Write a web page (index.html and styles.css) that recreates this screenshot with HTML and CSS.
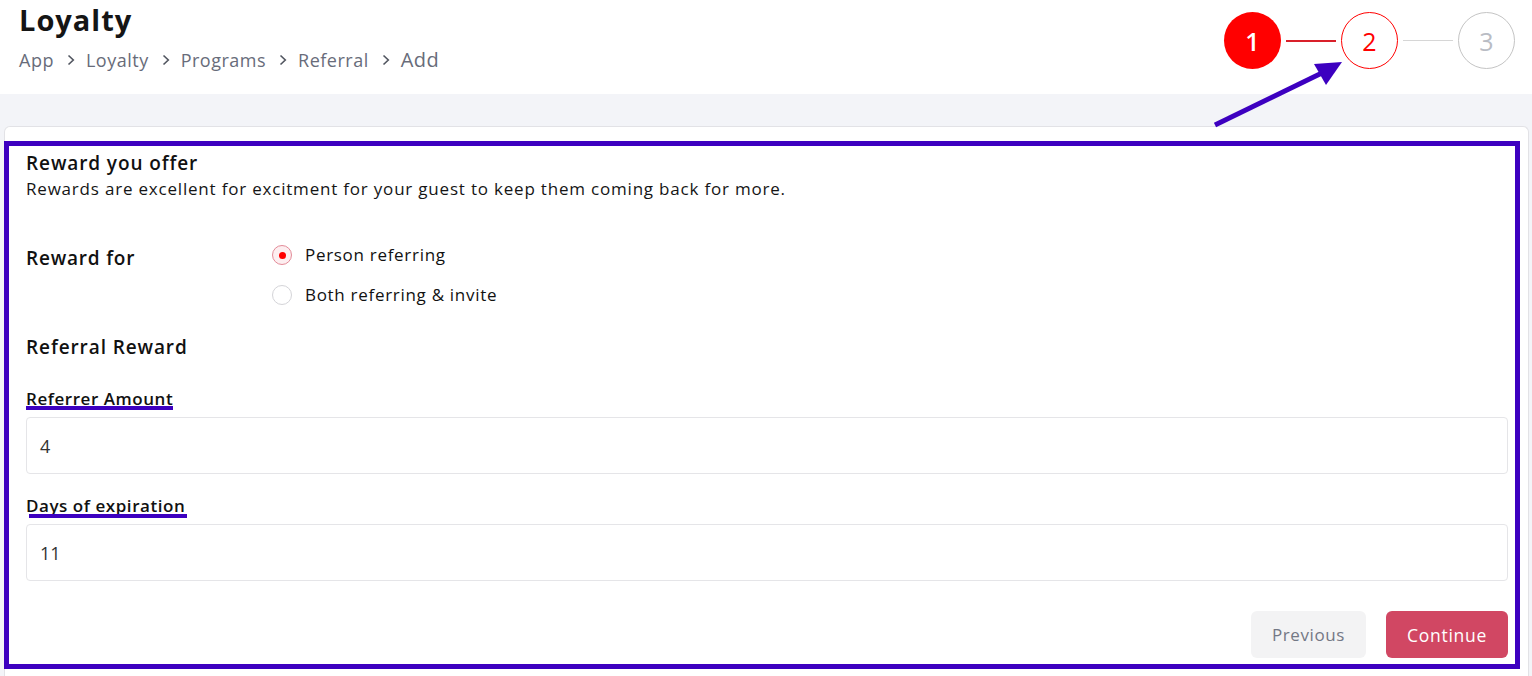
FILE: index.html
```html
<!DOCTYPE html>
<html lang="en">
<head>
<meta charset="utf-8">
<title>Loyalty</title>
<link rel="stylesheet" href="styles.css">
</head>
<body>
<header class="topbar">
  <div class="title-block">
    <h1 class="page-title">Loyalty</h1>
    <nav class="crumbs">
      <span>App</span><svg class="sep" width="8" height="12" viewBox="0 0 8 12"><path d="M1.5 1.5 L6.3 6 L1.5 10.5" fill="none" stroke="#50555f" stroke-width="1.6"/></svg>
      <span>Loyalty</span><svg class="sep" width="8" height="12" viewBox="0 0 8 12"><path d="M1.5 1.5 L6.3 6 L1.5 10.5" fill="none" stroke="#50555f" stroke-width="1.6"/></svg>
      <span>Programs</span><svg class="sep" width="8" height="12" viewBox="0 0 8 12"><path d="M1.5 1.5 L6.3 6 L1.5 10.5" fill="none" stroke="#50555f" stroke-width="1.6"/></svg>
      <span>Referral</span><svg class="sep" width="8" height="12" viewBox="0 0 8 12"><path d="M1.5 1.5 L6.3 6 L1.5 10.5" fill="none" stroke="#50555f" stroke-width="1.6"/></svg>
      <span class="last">Add</span>
    </nav>
  </div>
  <div class="stepper">
    <div class="step done">1</div>
    <div class="link red"></div>
    <div class="step active">2</div>
    <div class="link grey"></div>
    <div class="step todo">3</div>
  </div>
</header>

<main class="content">
  <section class="card">
    <h2 class="sec-title">Reward you offer</h2>
    <p class="sec-desc">Rewards are excellent for excitment for your guest to keep them coming back for more.</p>

    <div class="reward-for">
      <div class="rf-label">Reward for</div>
      <div class="radios">
        <label class="radio"><span class="dot checked"></span>Person referring</label>
        <label class="radio"><span class="dot"></span>Both referring &amp; invite</label>
      </div>
    </div>

    <h3 class="sub-title">Referral Reward</h3>

    <div class="field">
      <div class="field-label">Referrer Amount</div>
      <div class="input">4</div>
    </div>
    <div class="field">
      <div class="field-label">Days of expiration</div>
      <div class="input">11</div>
    </div>

    <div class="actions">
      <button class="btn prev">Previous</button>
      <button class="btn next">Continue</button>
    </div>
  </section>
</main>

<div class="annot-box"></div>
<div class="annot-line a1"></div>
<div class="annot-line a2"></div>
<svg class="annot-arrow" width="1532" height="140" viewBox="0 0 1532 140">
  <line x1="1215" y1="125" x2="1326" y2="71" stroke="#3d00c0" stroke-width="5"/>
  <polygon points="1342,62 1314,64 1326,85" fill="#3d00c0"/>
</svg>
</body>
</html>
```

FILE: styles.css
```css
* { box-sizing: border-box; }
html, body { margin: 0; padding: 0; }
body {
  font-family: "Open Sans", "Liberation Sans", sans-serif;
  background: #f3f4f8;
  color: #111;
  width: 1532px;
  height: 676px;
  overflow: hidden;
  position: relative;
}
.topbar {
  background: #fff;
  height: 94px;
  display: flex;
  justify-content: space-between;
  align-items: flex-start;
  padding: 0 17px 0 19px;
}
.page-title {
  margin: 1px 0 0;
  font-size: 29px;
  font-weight: 700;
  color: #151515;
  line-height: 38px;
  letter-spacing: 1px;
}
.crumbs {
  margin-top: 9px;
  font-size: 18px;
  letter-spacing: 0.5px;
  color: #686c7a;
  display: flex;
  align-items: center;
  line-height: 24px;
}
.crumbs .sep { margin: 0 11px 0 13px; }
.crumbs .last { font-size: 20px; }
.stepper {
  display: flex;
  align-items: center;
  margin-top: 12px;
}
.step {
  width: 57px;
  height: 57px;
  border-radius: 50%;
  display: flex;
  align-items: center;
  justify-content: center;
  font-size: 25px;
  font-family: "Open Sans", sans-serif;
}
.step.done { background: #ff0000; color: #fff; font-weight: 600; }
.step.active { border: 1px solid #ff0000; color: #ff0000; background: #fff; }
.step.todo { border: 1px solid #c4c4c4; color: #b9bcc4; background: #fff; }
.link { width: 50px; height: 2px; margin: 0 5px; }
.link.red { background: #d9202a; }
.link.grey { background: #d6d6d6; height: 1px; }

.content { padding: 32px 3px 0 4px; }
.card {
  background: #fff;
  border: 1px solid #e2e2e6;
  border-bottom: 0;
  border-radius: 6px 6px 0 0;
  padding: 23px 20px 0 21px;
  height: 550px;
}
.sec-title {
  margin: 0;
  font-size: 19px;
  font-weight: 600;
  line-height: 26px;
  letter-spacing: 0.9px;
  color: #111;
}
.sec-desc {
  margin: 0;
  font-size: 17px;
  line-height: 26px;
  letter-spacing: 0.8px;
  color: #151515;
}
.reward-for {
  display: flex;
  margin-top: 40px;
}
.rf-label {
  width: 246px;
  font-size: 19px;
  font-weight: 600;
  line-height: 26px;
  letter-spacing: 0.8px;
  padding-top: 3px;
}
.radios { display: flex; flex-direction: column; gap: 14px; }
.radio {
  display: flex;
  align-items: center;
  font-size: 17px;
  line-height: 26px;
  letter-spacing: 0.7px;
  color: #111;
}
.dot {
  width: 20px;
  height: 20px;
  border-radius: 50%;
  border: 1px solid #d4d4d8;
  margin-right: 13px;
  display: inline-flex;
  align-items: center;
  justify-content: center;
  background: #fff;
}
.dot.checked {
  border-color: #e38b98;
  background: #fdeef0;
}
.dot.checked::after {
  content: "";
  width: 7px;
  height: 7px;
  border-radius: 50%;
  background: #ff0000;
}
.sub-title {
  margin: 26px 0 0;
  font-size: 19px;
  font-weight: 600;
  line-height: 26px;
  letter-spacing: 0.9px;
}
.field { margin-top: 28px; }
.field + .field { margin-top: 21px; }
.field-label {
  font-size: 17px;
  font-weight: 600;
  line-height: 22px;
  letter-spacing: 0.55px;
  margin-bottom: 7px;
}
.input {
  height: 57px;
  border: 1px solid #e5e5e8;
  border-radius: 4px;
  padding: 0 13px;
  display: flex;
  align-items: center;
  font-size: 18px;
  color: #333;
}
.actions {
  display: flex;
  justify-content: flex-end;
  gap: 20px;
  margin-top: 30px;
}
.btn {
  height: 47px;
  border: none;
  border-radius: 6px;
  font-family: inherit;
  font-size: 17px;
  letter-spacing: 0.6px;
  padding: 0;
}
.btn.prev { background: #f3f3f4; color: #737885; width: 115px; }
.btn.next { background: #d14763; color: #fff; width: 122px; font-size: 17.5px; letter-spacing: 0.7px; }

/* annotations overlaid on screenshot */
.annot-box {
  position: absolute;
  left: 4px;
  top: 141px;
  width: 1516px;
  height: 528px;
  border: 5px solid #3d00c0;
  pointer-events: none;
}
.annot-line {
  position: absolute;
  height: 4px;
  background: #3d00c0;
}
.annot-line.a1 { left: 26px; top: 406px; width: 147px; }
.annot-line.a2 { left: 29px; top: 514px; width: 158px; }
.annot-arrow {
  position: absolute;
  left: 0;
  top: 0;
  pointer-events: none;
}
```
